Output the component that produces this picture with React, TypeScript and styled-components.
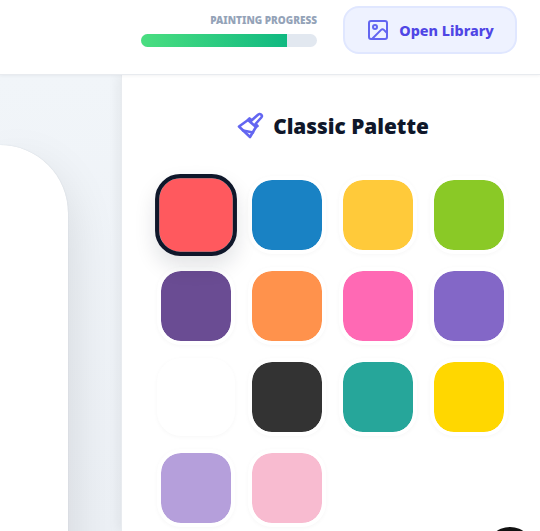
import React from "react";
import styled, { createGlobalStyle } from "styled-components";
import { Image as ImageIcon } from "lucide-react";

const Global = createGlobalStyle`
  html, body { margin: 0; padding: 0; height: 100%; overflow: hidden; background: #fff; }
  #root { height: 100%; }
  * { box-sizing: border-box; }
`;

const Page = styled.div`
  position: relative;
  width: 540px;
  height: 531px;
  display: flex;
  flex-direction: column;
  overflow: hidden;
  font-family: "Noto Sans", "Open Sans", sans-serif;
  background: #f1f5f9;
`;

const Header = styled.header`
  height: 75px;
  flex: none;
  display: flex;
  justify-content: flex-end;
  align-items: flex-start;
  gap: 26px;
  padding: 6px 23px 0 0;
  background: #fff;
  border-bottom: 1px solid #e8ebef;
  box-shadow: 0 1px 3px rgba(15, 23, 42, 0.05);
  position: relative;
  z-index: 2;
`;

const Progress = styled.div`
  width: 176px;
  padding-top: 7px;
  display: flex;
  flex-direction: column;
  gap: 7px;
`;

const ProgressLabel = styled.div`
  text-align: right;
  font-size: 10px;
  line-height: 14px;
  font-weight: 900;
  color: #94a3b8;
  text-transform: uppercase;
`;

const Track = styled.div`
  height: 13px;
  border-radius: 7px;
  background: #e2e8f0;
  overflow: hidden;
`;

const Fill = styled.div<{ $pct: number }>`
  height: 100%;
  width: ${(p) => p.$pct}%;
  background: linear-gradient(90deg, #4ade80, #10b981);
`;

const LibraryButton = styled.button`
  width: 174px;
  height: 48px;
  display: flex;
  align-items: center;
  justify-content: center;
  gap: 9px;
  border: 2px solid #e0e7ff;
  border-radius: 16px;
  background: #eef2ff;
  color: #4f46e5;
  font: 800 14.4px "Noto Sans", "Open Sans", sans-serif;
  padding: 0;
  svg { color: #6366f1; }
`;

const Body = styled.main`
  flex: 1;
  min-height: 0;
  display: flex;
`;

const Stage = styled.section`
  width: 121px;
  flex: none;
  padding: 70px 53px 0 0;
  background: linear-gradient(180deg, #f1f5f9, #ecf0f5);
`;

const Canvas = styled.div`
  height: 100%;
  min-height: 500px;
  background: #fff;
  border-top-right-radius: 68px;
  box-shadow: 0 0 1px rgba(100, 116, 139, 0.3), 0 20px 50px rgba(0, 0, 0, 0.12);
`;

const Panel = styled.aside`
  flex: 1;
  background: #fff;
  border-left: 1px solid #e8ebef;
  box-shadow: -4px 0 10px rgba(0, 0, 0, 0.05);
  padding: 34px 34px 0 35px;
  position: relative;
`;

const PanelTitle = styled.h2`
  margin: 0 0 33px;
  height: 34px;
  display: flex;
  align-items: center;
  justify-content: center;
  gap: 9px;
  font-size: 20.8px;
  font-weight: 900;
  color: #0f172a;
  svg { color: #6366f1; }
`;

const Swatches = styled.div`
  display: grid;
  grid-template-columns: repeat(4, 78px);
  gap: 13px;
`;

const Swatch = styled.button<{ $color: string; $active?: boolean }>`
  width: 78px;
  height: 78px;
  padding: 0;
  border-radius: 24px;
  background: ${(p) => p.$color};
  background-clip: padding-box;
  border: 4px solid ${(p) => (p.$active ? "#0f172a" : "#fff")};
  box-shadow: ${(p) =>
    p.$active ? "0 10px 20px rgba(15, 23, 42, 0.12)" : "0 1px 4px rgba(15, 23, 42, 0.035)"};
  transform: ${(p) => (p.$active ? "scale(1.05)" : "none")};
`;

const Fab = styled.div`
  position: absolute;
  right: 6px;
  bottom: -44px;
  width: 48px;
  height: 48px;
  border-radius: 50%;
  background: #111;
`;

const BrushIcon = () => (
  <svg width="28" height="28" viewBox="0 0 28 28" fill="none" stroke="currentColor" strokeWidth="2.6" strokeLinejoin="round" strokeLinecap="round">
    <path d="M12 8 3 14.5 14 25l6-10" />
    <path d="M12 8l1.5-1.5 2 2L22 2.8a2 2 0 0 1 3.3 2.7L19.5 12l2 2L20 15z" />
    <path d="M7 18.5 17 20.5" />
  </svg>
);

const colors = [
  "#ff595e", "#1982c4", "#ffca3a", "#8ac926",
  "#6a4c93", "#ff924c", "#ff69b4", "#8367c7",
  "#ffffff", "#333333", "#26a69a", "#ffd700",
  "#b59fdb", "#f8bbd0",
];

export default function App() {
  return (
    <Page>
      <Global />
      <Header>
        <Progress>
          <ProgressLabel>Painting Progress</ProgressLabel>
          <Track>
            <Fill $pct={83} />
          </Track>
        </Progress>
        <LibraryButton>
          <ImageIcon size={24} strokeWidth={2} />
          Open Library
        </LibraryButton>
      </Header>
      <Body>
        <Stage>
          <Canvas />
        </Stage>
        <Panel>
          <PanelTitle>
            <BrushIcon />
            Classic Palette
          </PanelTitle>
          <Swatches>
            {colors.map((c, i) => (
              <Swatch key={c} $color={c} $active={i === 0} />
            ))}
          </Swatches>
        </Panel>
      </Body>
      <Fab />
    </Page>
  );
}
